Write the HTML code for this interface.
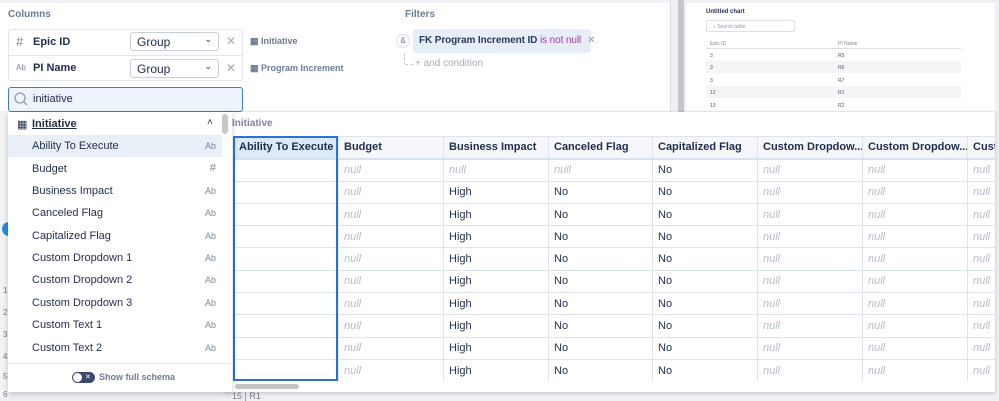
<!DOCTYPE html>
<html><head><meta charset="utf-8"><style>
*{box-sizing:border-box;margin:0;padding:0}
body{width:999px;height:400px;overflow:hidden;background:#eef0f4;font-family:"Liberation Sans",sans-serif;position:relative;color:#1f2d4d}
.a{position:absolute}
.lbl{font-size:12px;color:#6b7a99;font-weight:bold}
.sel{border:1px solid #c9cfda;border-radius:3px;background:#fff;font-size:12px;height:19px;padding:2px 6px;color:#1f2d4d}
.item{position:absolute;left:8px;width:214px;height:22px;font-size:11px;padding:5px 0 0 24px;color:#1f2d4d}
.item span{position:absolute;right:6px;top:6px;font-size:9px;color:#7a869e}
table{border-collapse:collapse;table-layout:fixed;font-size:11px}
td,th{border:1px solid #dbe4ef;height:22.3px;padding:0 5px;white-space:nowrap;overflow:hidden;text-align:left}
th{background:#f5f7fa;font-weight:bold;color:#1f2d4d;border-bottom:2px solid #d6e2f0}
td.n{color:#b5bccb;font-style:italic}
.ct{font-size:5px;color:#556}
</style></head><body>
<div class="a" style="left:0;top:3px;width:670px;height:108px;background:#fff"></div>
<div class="a lbl" style="left:8px;top:9px;font-size:10px">Columns</div>
<div class="a" style="left:8px;top:29px;width:235px;height:52px;border:1px solid #e1e5ec;border-radius:3px;background:#fff"></div>
<div class="a" style="left:8px;top:55px;width:235px;height:1px;background:#e1e5ec"></div>
<div class="a" style="left:16px;top:34px;font-size:13px;color:#7a869e">#</div>
<div class="a" style="left:33px;top:36px;font-size:11px;font-weight:bold">Epic ID</div>
<div class="a sel" style="left:130px;top:32px;width:89px">Group<span style="position:absolute;right:6px;top:1px;font-size:9px">⌄</span></div>
<div class="a" style="left:226px;top:34px;color:#aab;font-size:12px">✕</div>
<div class="a" style="left:16px;top:63px;font-size:8px;color:#7a869e">Ab</div>
<div class="a" style="left:33px;top:62px;font-size:11px;font-weight:bold">PI Name</div>
<div class="a sel" style="left:130px;top:59px;width:89px">Group<span style="position:absolute;right:6px;top:1px;font-size:9px">⌄</span></div>
<div class="a" style="left:226px;top:61px;color:#aab;font-size:12px">✕</div>
<div class="a" style="left:250px;top:36px;font-size:9px;color:#6b7a99;font-weight:bold">▦ Initiative</div>
<div class="a" style="left:250px;top:63px;font-size:9px;color:#6b7a99;font-weight:bold">▦ Program Increment</div>
<div class="a" style="left:8px;top:87px;width:235px;height:25px;border:1px solid #3b7bd8;border-radius:3px;background:#eef4fc"></div>
<svg class="a" style="left:13px;top:91px" width="16" height="16"><circle cx="7" cy="7" r="5" fill="none" stroke="#99a" stroke-width="1.3"/><line x1="10.5" y1="10.5" x2="14" y2="14" stroke="#99a" stroke-width="1.3"/></svg>
<div class="a" style="left:33px;top:93px;font-size:11px">initiative</div>
<div class="a lbl" style="left:405px;top:9px;font-size:10px">Filters</div>
<div class="a" style="left:396px;top:34px;width:14px;height:14px;border:1px solid #dde;border-radius:50%;background:#fff;font-size:8px;color:#778;text-align:center;line-height:12px">&amp;</div>
<div class="a" style="left:413px;top:29px;width:178px;height:24px;background:#e8eef7;border-radius:3px;font-size:10px;padding:6px 6px;font-weight:bold;color:#2a3a5c;white-space:nowrap;letter-spacing:-0.1px">FK Program Increment ID <span style="color:#9b3aa6;font-weight:normal">is not null</span><span style="color:#99a;font-weight:normal;margin-left:6px">✕</span></div>
<div class="a" style="left:404px;top:53px;width:1px;height:11px;border-left:1px dashed #ccd"></div>
<div class="a" style="left:405px;top:64px;width:9px;height:1px;border-top:1px dashed #ccd"></div>
<div class="a" style="left:415px;top:58px;font-size:10px;color:#aab">+ and condition</div>
<div class="a" style="left:670px;top:0;width:1px;height:112px;background:#dde"></div>
<div class="a" style="left:678px;top:0;width:6px;height:112px;background:#c3c6cc"></div>
<div class="a" style="left:686px;top:3px;width:309px;height:108px;background:#fff"></div>
<div class="a" style="left:706px;top:9px;font-size:6px;font-weight:bold">Untitled chart</div>
<div class="a ct" style="left:706px;top:20px;width:89px;height:12px;border:1px solid #dde;border-radius:2px;padding:3px 6px;color:#99a">⌕ Search table</div>
<div class="a ct" style="left:710px;top:41px;color:#888">Epic ID</div><div class="a ct" style="left:838px;top:41px;color:#888">PI Name</div>
<div class="a" style="left:706px;top:48px;width:255px;height:1px;background:#dde"></div>
<div class="a" style="left:706px;top:61px;width:255px;height:12px;background:#f4f5f7"></div>
<div class="a" style="left:706px;top:86px;width:255px;height:12px;background:#f4f5f7"></div>
<div class="a ct" style="left:710px;top:53px">3</div><div class="a ct" style="left:838px;top:53px">R5</div>
<div class="a ct" style="left:710px;top:65px">3</div><div class="a ct" style="left:838px;top:65px">R6</div>
<div class="a ct" style="left:710px;top:78px">3</div><div class="a ct" style="left:838px;top:78px">R7</div>
<div class="a ct" style="left:710px;top:90px">12</div><div class="a ct" style="left:838px;top:90px">R1</div>
<div class="a ct" style="left:710px;top:103px">13</div><div class="a ct" style="left:838px;top:103px">R2</div>
<div class="a" style="left:0;top:112px;width:10px;height:285px;background:#f3f4f6"></div>
<div class="a" style="left:2px;top:222px;width:8px;height:14px;background:#2a8be0;border-radius:7px 0 0 7px"></div>
<div class="a" style="left:3px;top:286px;font-size:8px;color:#778">1</div>
<div class="a" style="left:3px;top:308px;font-size:8px;color:#778">2</div>
<div class="a" style="left:3px;top:330px;font-size:8px;color:#778">3</div>
<div class="a" style="left:3px;top:352px;font-size:8px;color:#778">4</div>
<div class="a" style="left:3px;top:372px;font-size:8px;color:#778">5</div>
<div class="a" style="left:3px;top:390px;font-size:8px;color:#778">6</div>
<div class="a" style="left:232px;top:391px;font-size:9px;color:#778">15 | R1</div>
<div class="a" style="left:225px;top:112px;width:770px;height:280px;background:#fff;box-shadow:0 1px 4px rgba(0,0,0,.2)"></div>
<div class="a" style="left:232px;top:118px;font-size:10px;font-weight:bold;color:#7a869e">Initiative</div>
<div class="a" style="left:233px;top:136px;width:762px;height:245px;overflow:hidden">
<table style="width:840px">
<colgroup><col style="width:105px"><col style="width:105px"><col style="width:105px"><col style="width:104px"><col style="width:105px"><col style="width:105px"><col style="width:105px"><col style="width:106px"></colgroup>
<tr><th style="background:#dce9f8">Ability To Execute</th><th>Budget</th><th>Business Impact</th><th>Canceled Flag</th><th>Capitalized Flag</th><th>Custom Dropdow...</th><th>Custom Dropdow...</th><th>Custom</th></tr>
<tr><td></td><td class="n">null</td><td class="n">null</td><td class="n">null</td><td>No</td><td class="n">null</td><td class="n">null</td><td class="n">null</td></tr>
<tr><td></td><td class="n">null</td><td>High</td><td>No</td><td>No</td><td class="n">null</td><td class="n">null</td><td class="n">null</td></tr>
<tr><td></td><td class="n">null</td><td>High</td><td>No</td><td>No</td><td class="n">null</td><td class="n">null</td><td class="n">null</td></tr>
<tr><td></td><td class="n">null</td><td>High</td><td>No</td><td>No</td><td class="n">null</td><td class="n">null</td><td class="n">null</td></tr>
<tr><td></td><td class="n">null</td><td>High</td><td>No</td><td>No</td><td class="n">null</td><td class="n">null</td><td class="n">null</td></tr>
<tr><td></td><td class="n">null</td><td>High</td><td>No</td><td>No</td><td class="n">null</td><td class="n">null</td><td class="n">null</td></tr>
<tr><td></td><td class="n">null</td><td>High</td><td>No</td><td>No</td><td class="n">null</td><td class="n">null</td><td class="n">null</td></tr>
<tr><td></td><td class="n">null</td><td>High</td><td>No</td><td>No</td><td class="n">null</td><td class="n">null</td><td class="n">null</td></tr>
<tr><td></td><td class="n">null</td><td>High</td><td>No</td><td>No</td><td class="n">null</td><td class="n">null</td><td class="n">null</td></tr>
<tr><td></td><td class="n">null</td><td>High</td><td>No</td><td>No</td><td class="n">null</td><td class="n">null</td><td class="n">null</td></tr>
</table></div>
<div class="a" style="left:233px;top:136px;width:105px;height:245px;border:2px solid #2e6fd8"></div>
<div class="a" style="left:235px;top:384px;width:64px;height:5px;background:#c4c4c4;border-radius:3px"></div>
<div class="a" style="left:8px;top:112px;width:224px;height:280px;background:#fff;box-shadow:0 2px 6px rgba(0,0,0,.2)"></div>
<div class="a" style="left:222px;top:114px;width:6px;height:20px;background:#c8c8c8;border-radius:3px"></div>
<div class="a" style="left:17px;top:118px;font-size:11px;color:#1f2d4d">▦</div>
<div class="a" style="left:32px;top:118px;font-size:11px;font-weight:bold;text-decoration:underline">Initiative</div>
<div class="a" style="left:207px;top:117px;font-size:10px">˄</div>
<div class="item" style="top:135px;background:#e9eff7">Ability To Execute<span>Ab</span></div>
<div class="item" style="top:158px">Budget<span style="font-size:11px;top:4px">#</span></div>
<div class="item" style="top:180px">Business Impact<span>Ab</span></div>
<div class="item" style="top:202px">Canceled Flag<span>Ab</span></div>
<div class="item" style="top:225px">Capitalized Flag<span>Ab</span></div>
<div class="item" style="top:247px">Custom Dropdown 1<span>Ab</span></div>
<div class="item" style="top:269px">Custom Dropdown 2<span>Ab</span></div>
<div class="item" style="top:292px">Custom Dropdown 3<span>Ab</span></div>
<div class="item" style="top:314px">Custom Text 1<span>Ab</span></div>
<div class="item" style="top:337px">Custom Text 2<span>Ab</span></div>
<div class="a" style="left:8px;top:363px;width:224px;height:1px;background:#e6e9ee"></div>
<div class="a" style="left:72px;top:372px;width:23px;height:11px;background:#3a4a6b;border-radius:6px"></div>
<div class="a" style="left:73px;top:373px;width:9px;height:9px;background:#fff;border-radius:50%"></div>
<div class="a" style="left:85px;top:373px;font-size:7px;line-height:9px;color:#fff">✕</div>
<div class="a" style="left:99px;top:372px;font-size:9px;color:#6b7a99;font-weight:bold">Show full schema</div>
</body></html>
